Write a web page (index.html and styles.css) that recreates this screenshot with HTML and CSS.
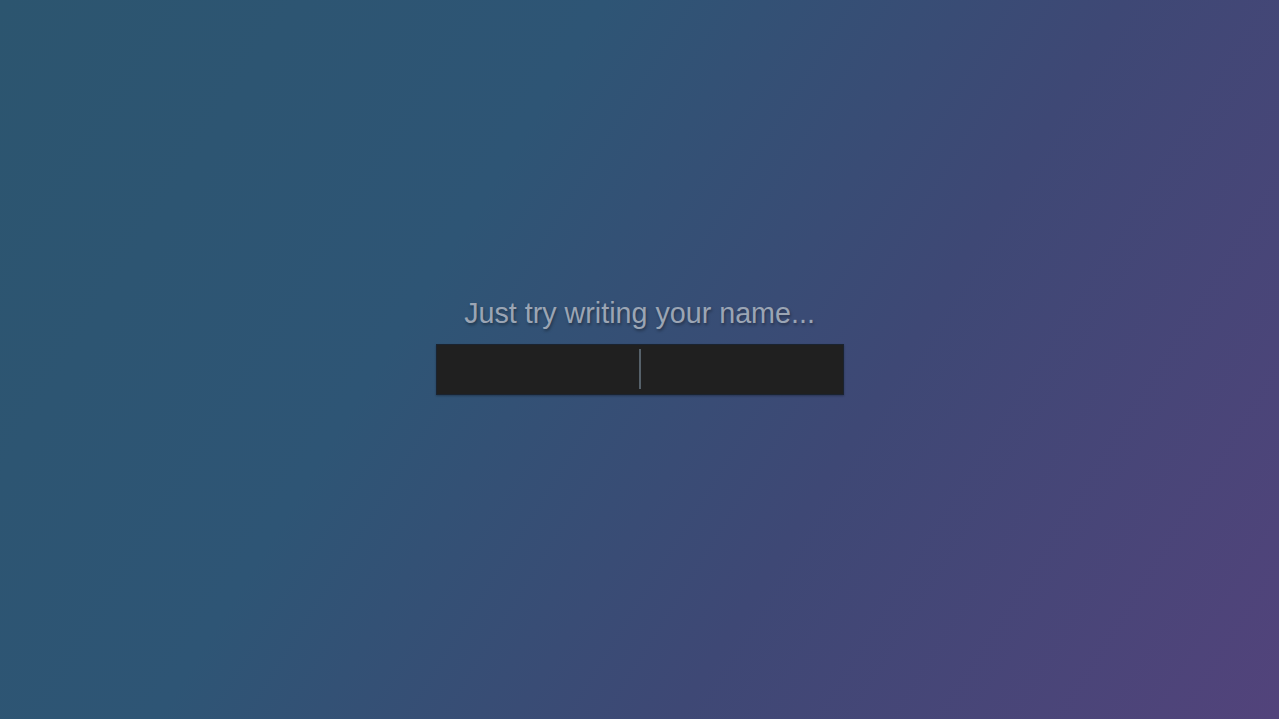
FILE: index.html
```html
<!DOCTYPE html>
<html>
<head>
<meta charset="utf-8">
<link rel="stylesheet" href="styles.css">
</head>
<body>
<main class="stage">
  <h1 class="prompt">Just try writing your name...</h1>
  <div class="field"><span class="caret"></span></div>
</main>
</body>
</html>
```
FILE: styles.css
```css
html, body {
  margin: 0;
  height: 100%;
}
body {
  background: linear-gradient(122deg, #2c556f 0%, #2e5575 35%, #3e4875 65%, #52437b 100%);
  font-family: "Liberation Sans", Arial, sans-serif;
}
.stage {
  height: 100%;
  display: flex;
  flex-direction: column;
  align-items: center;
  justify-content: center;
  padding-bottom: 28px;
  box-sizing: border-box;
}
.prompt {
  margin: 0 0 15px;
  font-size: 28.7px;
  font-weight: normal;
  color: #9ba5b4;
  text-shadow: 1px 2px 3px rgba(0,0,0,0.35);
  line-height: 32px;
}
.field {
  width: 406px;
  height: 49px;
  background: #202020;
  border: 1px solid #1a2330;
  display: flex;
  align-items: center;
  justify-content: center;
  box-shadow: 0 1px 2px rgba(0,0,0,0.3);
}
.caret {
  width: 2px;
  height: 40px;
  background: #56616a;
}
```
